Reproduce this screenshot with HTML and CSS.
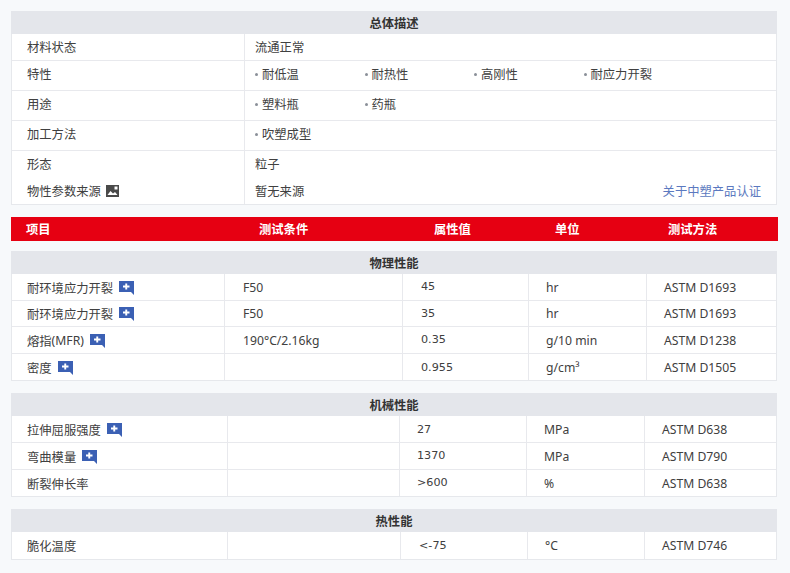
FILE: index.html
```html
<!DOCTYPE html>
<html lang="zh">
<head>
<meta charset="utf-8">
<title>物性表</title>
<link rel="stylesheet" href="styles.css">
</head>
<body>
<svg class="defs" width="0" height="0" aria-hidden="true">
  <symbol id="plus" viewBox="0 0 15 14">
    <path d="M0 0H15V14L12 11H0Z" fill="#3b60b4"/>
    <path d="M6.3 2.5H8.2V4.6H10.5V6.4H8.2V8.6H6.3V6.4H4V4.6H6.3Z" fill="#fff"/>
  </symbol>
</svg>

<section class="sheet overview">
  <h2 class="title">总体描述</h2>
  <div class="row r27 line"><div class="name">材料状态</div><div class="info">流通正常</div></div>
  <div class="row r30 line"><div class="name">特性</div><div class="info"><ul class="tags"><li>耐低温</li><li>耐热性</li><li>高刚性</li><li>耐应力开裂</li></ul></div></div>
  <div class="row r30 line"><div class="name">用途</div><div class="info"><ul class="tags"><li>塑料瓶</li><li>药瓶</li></ul></div></div>
  <div class="row r30 line"><div class="name">加工方法</div><div class="info"><ul class="tags"><li>吹塑成型</li></ul></div></div>
  <div class="row r26"><div class="name">形态</div><div class="info">粒子</div></div>
  <div class="row r27"><div class="name">物性参数来源
    <svg class="photo" viewBox="0 0 13 12" width="13" height="12" aria-hidden="true"><rect width="13" height="12" fill="#4a4a4a"/><path d="M1.5 10L4.5 6L7 8.5L9 7L11.5 10Z" fill="#fff"/><path d="M8.5 1.5H11.5V4.5H8.5Z" fill="#fff"/></svg></div>
    <div class="info split"><span>暂无来源</span><a class="cert" href="#">关于中塑产品认证</a></div></div>
</section>

<header class="heads"><span>项目</span><span>测试条件</span><span>属性值</span><span>单位</span><span>测试方法</span></header>

<section class="sheet phys">
  <h2 class="title">物理性能</h2>
  <div class="data line"><div class="name">耐环境应力开裂<svg class="add"><use href="#plus"/></svg></div><div class="lat">F50</div><div class="lat val">45</div><div class="lat">hr</div><div class="lat">ASTM D1693</div></div>
  <div class="data line"><div class="name">耐环境应力开裂<svg class="add"><use href="#plus"/></svg></div><div class="lat">F50</div><div class="lat val">35</div><div class="lat">hr</div><div class="lat">ASTM D1693</div></div>
  <div class="data line"><div class="name">熔指<span class="lat">(MFR)</span><svg class="add"><use href="#plus"/></svg></div><div class="lat">190°C/2.16kg</div><div class="lat val">0.35</div><div class="lat">g/10 min</div><div class="lat">ASTM D1238</div></div>
  <div class="data"><div class="name">密度<svg class="add"><use href="#plus"/></svg></div><div></div><div class="lat val">0.955</div><div class="lat">g/cm³</div><div class="lat">ASTM D1505</div></div>
</section>

<section class="sheet mech">
  <h2 class="title">机械性能</h2>
  <div class="data line"><div class="name">拉伸屈服强度<svg class="add"><use href="#plus"/></svg></div><div></div><div class="lat val">27</div><div class="lat">MPa</div><div class="lat">ASTM D638</div></div>
  <div class="data line"><div class="name">弯曲模量<svg class="add"><use href="#plus"/></svg></div><div></div><div class="lat val">1370</div><div class="lat">MPa</div><div class="lat">ASTM D790</div></div>
  <div class="data"><div class="name">断裂伸长率</div><div></div><div class="lat val">&gt;600</div><div class="lat">%</div><div class="lat">ASTM D638</div></div>
</section>

<section class="sheet therm">
  <h2 class="title">热性能</h2>
  <div class="data"><div class="name">脆化温度</div><div></div><div class="lat val">&lt;-75</div><div class="lat">°C</div><div class="lat">ASTM D746</div></div>
</section>
</body>
</html>
```

FILE: styles.css
```css
* { box-sizing: border-box; }

html, body { margin: 0; background: #f7f9fb; }

body {
  width: 790px;
  height: 573px;
  overflow: hidden;
  padding: 11px 13px 0 11px;
  font-family: "Noto Sans CJK SC", "Liberation Sans", sans-serif;
  font-size: 12.3px;
  line-height: 16px;
  color: #404040;
}

.defs { position: absolute; }

.sheet {
  background: #fff;
  border: 1px solid #e6e8ec;
  border-top: 0;
  margin-bottom: 12px;
}

.title {
  margin: 0 -1px;
  height: 23px;
  background: #e4e6eb;
  color: #333;
  font-size: 12.3px;
  font-weight: 700;
  line-height: 24px;
  text-align: center;
}

.line { border-bottom: 1px solid #e8e9ed; }

/* overview */
.overview { margin-bottom: 12px; }

.row {
  display: grid;
  grid-template-columns: 232px 1fr;
  align-items: stretch;
}

.r26 { height: 26px; }
.r27 { height: 27px; }
.r30 { height: 30px; padding-bottom: 1px; }

.row > div { display: flex; align-items: center; }

.row .name { padding-left: 15px; gap: 5px; }

.r30 .name { padding-bottom: 2px; }

.row .info {
  padding-left: 10px;
  border-left: 1px solid #e8e9ed;
}

.r30 .info { margin-bottom: -1px; }

.split { justify-content: space-between; padding-right: 15px; }

.cert { color: #5b79c0; text-decoration: none; }

.photo { display: block; }

.tags {
  display: grid;
  grid-template-columns: repeat(4, 109.5px);
  list-style: none;
  margin: 0;
  padding: 0 0 3px;
}

.tags li {
  display: flex;
  align-items: center;
  gap: 4px;
}

.tags li::before {
  content: "";
  width: 3px;
  height: 3px;
  border-radius: 50%;
  background: #8a8f98;
}

/* red head */
.heads {
  display: grid;
  grid-template-columns: 233px 175px 121px 113px 1fr;
  width: 767px;
  height: 24px;
  margin-bottom: 10px;
  padding-left: 15px;
  align-items: center;
  background: #e60012;
  color: #fff;
  font-size: 12.3px;
  font-weight: 700;
}

/* data rows */
.data { display: grid; height: 26.6px; }

.phys .data { grid-template-columns: 212px 178px 126px 118px 1fr; }
.mech .data { grid-template-columns: 215px 172px 127px 118px 1fr; }
.therm .data { grid-template-columns: 215px 173px 127px 117px 1fr; }

.data > div {
  display: flex;
  align-items: center;
  padding: 2px 0 0 17px;
  border-left: 1px solid #e8e9ed;
}

.phys .data > div:nth-child(2) { padding-left: 18px; }
.phys .data > div:nth-child(3) { padding-left: 18px; }

.data > .name { padding-left: 15px; border-left: 0; }

.lat { font-family: "Noto Sans", "DejaVu Sans", sans-serif; font-size: 12.2px; }

.data > .val { padding: 1px 0 0 18px; font-family: "DejaVu Sans", sans-serif; font-size: 11.2px; }

.mech .data > .val { padding-left: 17px; }

.add { width: 15px; height: 14px; margin-left: 6px; }
```
